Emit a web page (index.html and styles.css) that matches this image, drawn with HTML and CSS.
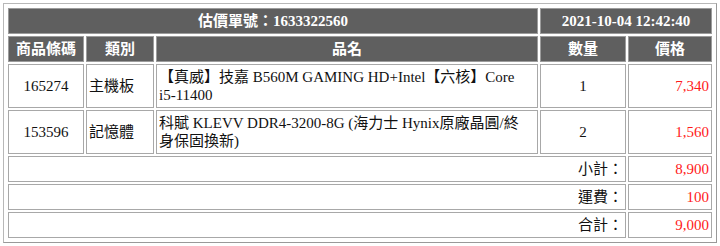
FILE: index.html
```html
<!DOCTYPE html>
<html lang="zh-Hant">
<head>
<meta charset="utf-8">
<link rel="stylesheet" href="styles.css">
</head>
<body>
<table class="quote">
  <colgroup>
    <col class="c-code">
    <col class="c-cat">
    <col class="c-name">
    <col class="c-qty">
    <col class="c-price">
  </colgroup>
  <tr class="head">
    <th colspan="3">估價單號：1633322560</th>
    <th colspan="2">2021-10-04 12:42:40</th>
  </tr>
  <tr class="head">
    <th>商品條碼</th>
    <th>類別</th>
    <th>品名</th>
    <th>數量</th>
    <th>價格</th>
  </tr>
  <tr>
    <td class="center">165274</td>
    <td>主機板</td>
    <td class="name">【真威】技嘉 B560M GAMING HD+Intel【六核】Core i5-11400</td>
    <td class="center">1</td>
    <td class="price">7,340</td>
  </tr>
  <tr>
    <td class="center">153596</td>
    <td>記憶體</td>
    <td class="name">科賦 KLEVV DDR4-3200-8G (海力士 Hynix原廠晶圓/終身保固換新)</td>
    <td class="center">2</td>
    <td class="price">1,560</td>
  </tr>
  <tr>
    <td colspan="4" class="label">小計：</td>
    <td class="price">8,900</td>
  </tr>
  <tr>
    <td colspan="4" class="label">運費：</td>
    <td class="price">100</td>
  </tr>
  <tr>
    <td colspan="4" class="label">合計：</td>
    <td class="price">9,000</td>
  </tr>
</table>
</body>
</html>
```

FILE: styles.css
```css
html, body {
  margin: 0;
  padding: 0;
  background: #ffffff;
}

body {
  padding: 3px;
  font-family: "Liberation Serif", "Noto Sans CJK TC", serif;
  font-size: 15px;
  color: #111111;
}

.quote {
  width: 713px;
  table-layout: fixed;
  border-collapse: separate;
  border-spacing: 2px;
  padding: 2px;
  border: 1px solid #b8b8b8;
  border-right-color: #999999;
  border-bottom-color: #999999;
}

.c-code { width: 76px; }
.c-cat { width: 68px; }
.c-name { width: 382px; }
.c-qty { width: 86px; }
.c-price { width: 84px; }

.quote th,
.quote td {
  border: 1px solid #a8a8a8;
  padding: 3px 2px;
  line-height: 18px;
  vertical-align: middle;
}

.head th {
  background: #5f5f5f;
  color: #ffffff;
  font-weight: bold;
  text-align: center;
  border-color: #9c9c9c;
}

.quote td {
  text-align: left;
}

.quote td.center {
  text-align: center;
}

.quote td.name {
  vertical-align: top;
  padding-right: 8px;
}

.quote td.price {
  text-align: right;
  color: #ff1a1a;
}

.quote td.label {
  text-align: right;
}
```
